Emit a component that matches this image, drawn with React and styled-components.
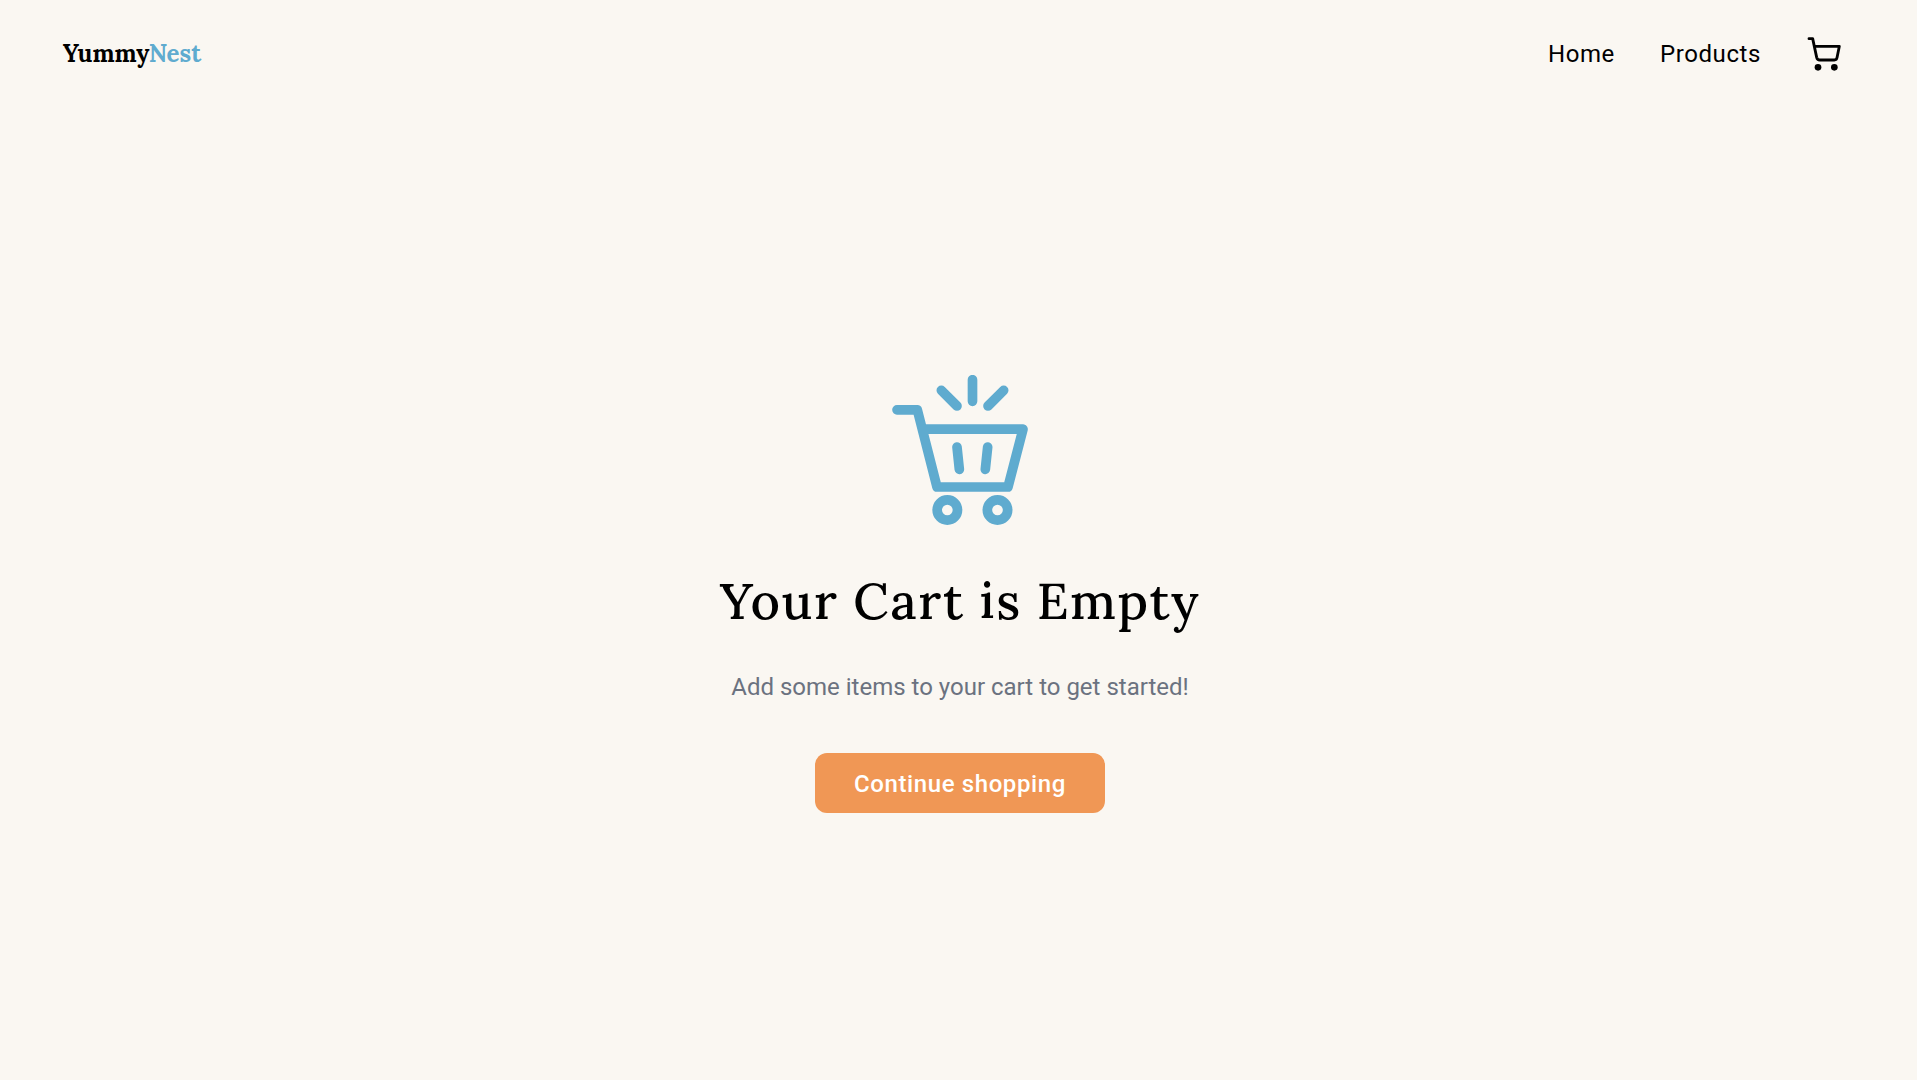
import React from "react";
import styled, { createGlobalStyle } from "styled-components";

const GlobalStyle = createGlobalStyle`
  *, *::before, *::after { box-sizing: border-box; }
  body {
    margin: 0;
    background: #faf7f2;
    color: #000;
    font-family: Roboto, "Liberation Sans", sans-serif;
  }
`;

const Page = styled.div`
  display: flex;
  flex-direction: column;
  min-height: 100vh;
`;

const Header = styled.header`
  display: flex;
  align-items: center;
  justify-content: space-between;
  padding: 36px 75px 36px 63px;
`;

const Logo = styled.a`
  font-family: Lora, "Liberation Serif", serif;
  font-size: 24px;
  line-height: 36px;
  font-weight: 700;
  color: #000;
  text-decoration: none;
`;

const Accent = styled.span`
  color: #5fabcf;
`;

const Nav = styled.nav`
  display: flex;
  align-items: center;
  gap: 45px;
`;

const NavLink = styled.a`
  display: flex;
  font-size: 24px;
  line-height: 36px;
  letter-spacing: 0.025em;
  color: #000;
  text-decoration: none;
`;

const EmptyCart = styled.main`
  flex: 1;
  display: flex;
  flex-direction: column;
  align-items: center;
  justify-content: center;
  padding-left: 3px;
  text-align: center;
`;

const Title = styled.h1`
  margin: 40px 0 32px;
  font-family: Lora, "Liberation Serif", serif;
  font-size: 51px;
  line-height: 72px;
  font-weight: 500;
  letter-spacing: 0.03em;
`;

const Message = styled.p`
  margin: 0 0 48px;
  font-size: 24px;
  line-height: 36px;
  color: #6b7280;
`;

const Button = styled.button`
  border: 0;
  border-radius: 12px;
  padding: 13px 39px 11px;
  background: #f09755;
  color: #fff;
  font-family: inherit;
  font-size: 24px;
  line-height: 36px;
  font-weight: 500;
  letter-spacing: 0.025em;
  cursor: pointer;
`;

const CartIcon = () => (
  <svg width="36" height="36" viewBox="828 48 108 108" fill="none" stroke="currentColor" strokeWidth="8.5" strokeLinecap="round" strokeLinejoin="round" aria-hidden="true">
    <path d="M837 56H848L860 112Q862 120 869 120H913Q920 120 921 113L928 79H853" />
    <circle cx="864" cy="142" r="10" fill="currentColor" stroke="none" />
    <circle cx="913" cy="142" r="10" fill="currentColor" stroke="none" />
  </svg>
);

const EmptyCartIcon = () => (
  <svg width="150" height="150" viewBox="45 45 450 450" fill="none" stroke="#5fabcf" strokeWidth="29" strokeLinecap="round" strokeLinejoin="round" aria-hidden="true">
    <path d="M81 149.500H142L201 381H414L459 207.500H160" />
    <path d="M307.500 59V124M214 91L261 138M401 91L354 138M261 261L268 328M353 261L346 328" />
    <circle cx="232" cy="450" r="30.500" />
    <circle cx="382.500" cy="450" r="30.500" />
  </svg>
);

export default function App() {
  return (
    <>
      <GlobalStyle />
      <Page>
        <Header>
          <Logo href="#home">Yummy<Accent>Nest</Accent></Logo>
          <Nav>
            <NavLink href="#home">Home</NavLink>
            <NavLink href="#products">Products</NavLink>
            <NavLink href="#cart" aria-label="Cart"><CartIcon /></NavLink>
          </Nav>
        </Header>
        <EmptyCart>
          <EmptyCartIcon />
          <Title>Your Cart is Empty</Title>
          <Message>Add some items to your cart to get started!</Message>
          <Button type="button">Continue shopping</Button>
        </EmptyCart>
      </Page>
    </>
  );
}
